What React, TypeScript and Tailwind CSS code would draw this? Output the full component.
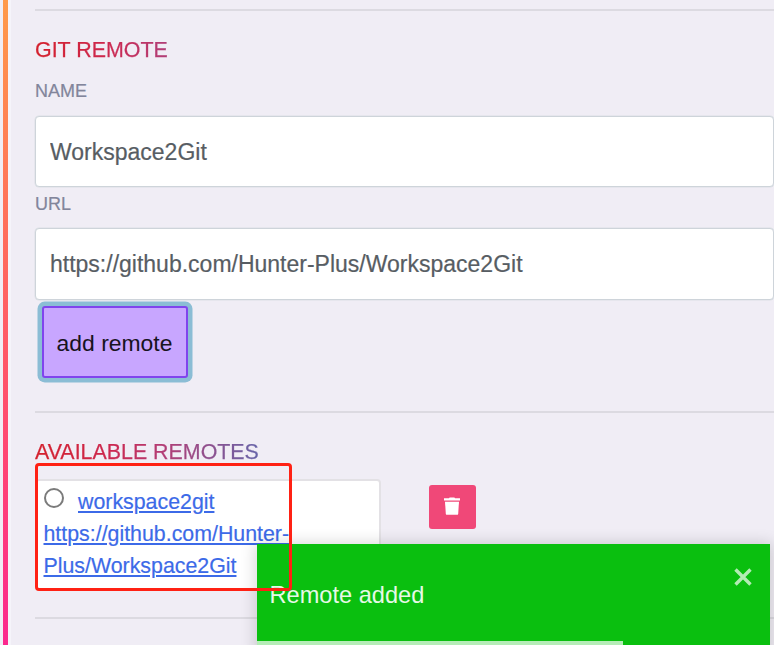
import type { ReactNode } from "react";

function Divider() {
  return <hr className="h-[2px] shrink-0 border-0 bg-[#dcdae1]" />;
}

function Heading({ children }: { children: ReactNode }) {
  return (
    <h2 className="h-8 w-[420px] bg-[linear-gradient(90deg,#d4202c_0%,#cc2850_18%,#b43c74_30%,#6864a8_53%,#4080c8_100%)] bg-clip-text text-[21.4px] leading-8 text-transparent [-webkit-text-stroke:0.25px_transparent]">
      {children}
    </h2>
  );
}

function Field({ label, value }: { label: string; value: string }) {
  return (
    <label className="block h-[112.5px]">
      <span className="block h-[26px] text-[18px] leading-[26px] text-[#82859b] [-webkit-text-stroke:0.2px_#82859b]">{label}</span>
      <input
        readOnly
        value={value}
        className="mt-[11.5px] block h-[71.5px] w-full rounded-[4px] border border-[#ced4da] bg-white px-[14px] pt-[2px] text-[23px] text-[#575d63] shadow-[0_0_0_0.5px_#dce0e6] outline-none [-webkit-text-stroke:0.2px_#575d63]"
      />
    </label>
  );
}

function TrashIcon() {
  return (
    <svg viewBox="0 0 18 20" className="h-[19px] w-[18px] fill-white" preserveAspectRatio="none">
      <path d="M6 1.3Q6 .5 7 .5h4q1 0 1 .8h5v2.4H1V1.3z" />
      <path d="M2 5h14l-.8 12.5q-.1 1.3-1.4 1.3H4.2q-1.3 0-1.4-1.3z" />
    </svg>
  );
}

function Toast() {
  return (
    <div className="absolute left-[256.5px] top-[543.5px] h-[110px] w-[513px] bg-[#0abf0f] shadow-[0_1px_14px_2px_rgba(0,0,0,0.16)]">
      <div className="flex h-[97.5px] items-start justify-between">
        <p className="pl-[13px] pt-[35px] text-[23.6px] leading-8 text-[#e6f9e6]">Remote added</p>
        <button aria-label="Close" className="mr-[18px] mt-[24px]">
          <svg viewBox="0 0 18 18" className="size-[18px] stroke-[#b3ebb4]" strokeWidth="3.4">
            <path d="M1.5 1.5l15 15M16.5 1.5l-15 15" />
          </svg>
        </button>
      </div>
      <div className="h-3 w-[366px] bg-[#b5ecb7]" />
    </div>
  );
}

export default function App() {
  return (
    <div className="relative flex h-[645px] w-full overflow-hidden bg-[#f0edf5] font-['Liberation_Sans',Arial,sans-serif]">
      <div className="ml-[3px] w-[4.5px] shrink-0 bg-[linear-gradient(180deg,#ff9a4a_0%,#ff8154_20%,#ff655f_43%,#ff4773_70%,#fb288e_100%)]" />
      <div className="w-[3px] shrink-0 bg-[#f5f4fa]" />
      <main className="ml-[24.5px] flex w-[739px] shrink-0 flex-col pt-[9px]">
        <Divider />
        <section className="flex h-[400px] flex-col pt-[23px]">
          <Heading>GIT REMOTE</Heading>
          <div className="mt-3">
            <Field label="NAME" value="Workspace2Git" />
            <Field label="URL" value="https://github.com/Hunter-Plus/Workspace2Git" />
          </div>
          <button className="ml-[6.5px] mt-[2.5px] h-[72.5px] w-[146px] shrink-0 rounded-[3px] border-2 border-[#8044ed] bg-[#c8a6ff] pt-[2px] text-[22.9px] text-[#171320] shadow-[0_0_0_4.5px_#8bbdd5]">
            add remote
          </button>
        </section>
        <Divider />
        <section className="flex h-[204px] flex-col pt-[23px]">
          <Heading>AVAILABLE REMOTES</Heading>
          <div className="mt-[11px] flex">
            <div className="h-[111px] w-[345.5px] rounded-[4px] border-2 border-[#e3e1e5] bg-white pl-[6.5px] pt-[5px] text-[21.35px] leading-[32px] text-[#3c6ae8] [-webkit-text-stroke:0.2px_#3c6ae8]">
              <div className="flex h-8">
                <span className="mt-[2px] size-5 rounded-full border-2 border-[#7b7b7b] bg-white" />
                <a className="ml-[14.5px] underline underline-offset-[2px]">workspace2git</a>
              </div>
              <a className="block underline underline-offset-[2px]">
                https://github.com/Hunter-
                <br />
                Plus/Workspace2Git
              </a>
            </div>
            <button aria-label="Delete remote" className="ml-[48.5px] mt-[6px] flex h-[43.5px] w-[46.5px] items-center justify-center rounded-[3px] bg-[#f04878]">
              <TrashIcon />
            </button>
          </div>
        </section>
        <Divider />
      </main>
      <Toast />
      <div className="pointer-events-none absolute left-[35px] top-[463px] h-[128px] w-[257px] rounded-[4px] border-[3px] border-[#ff2114]" />
    </div>
  );
}
